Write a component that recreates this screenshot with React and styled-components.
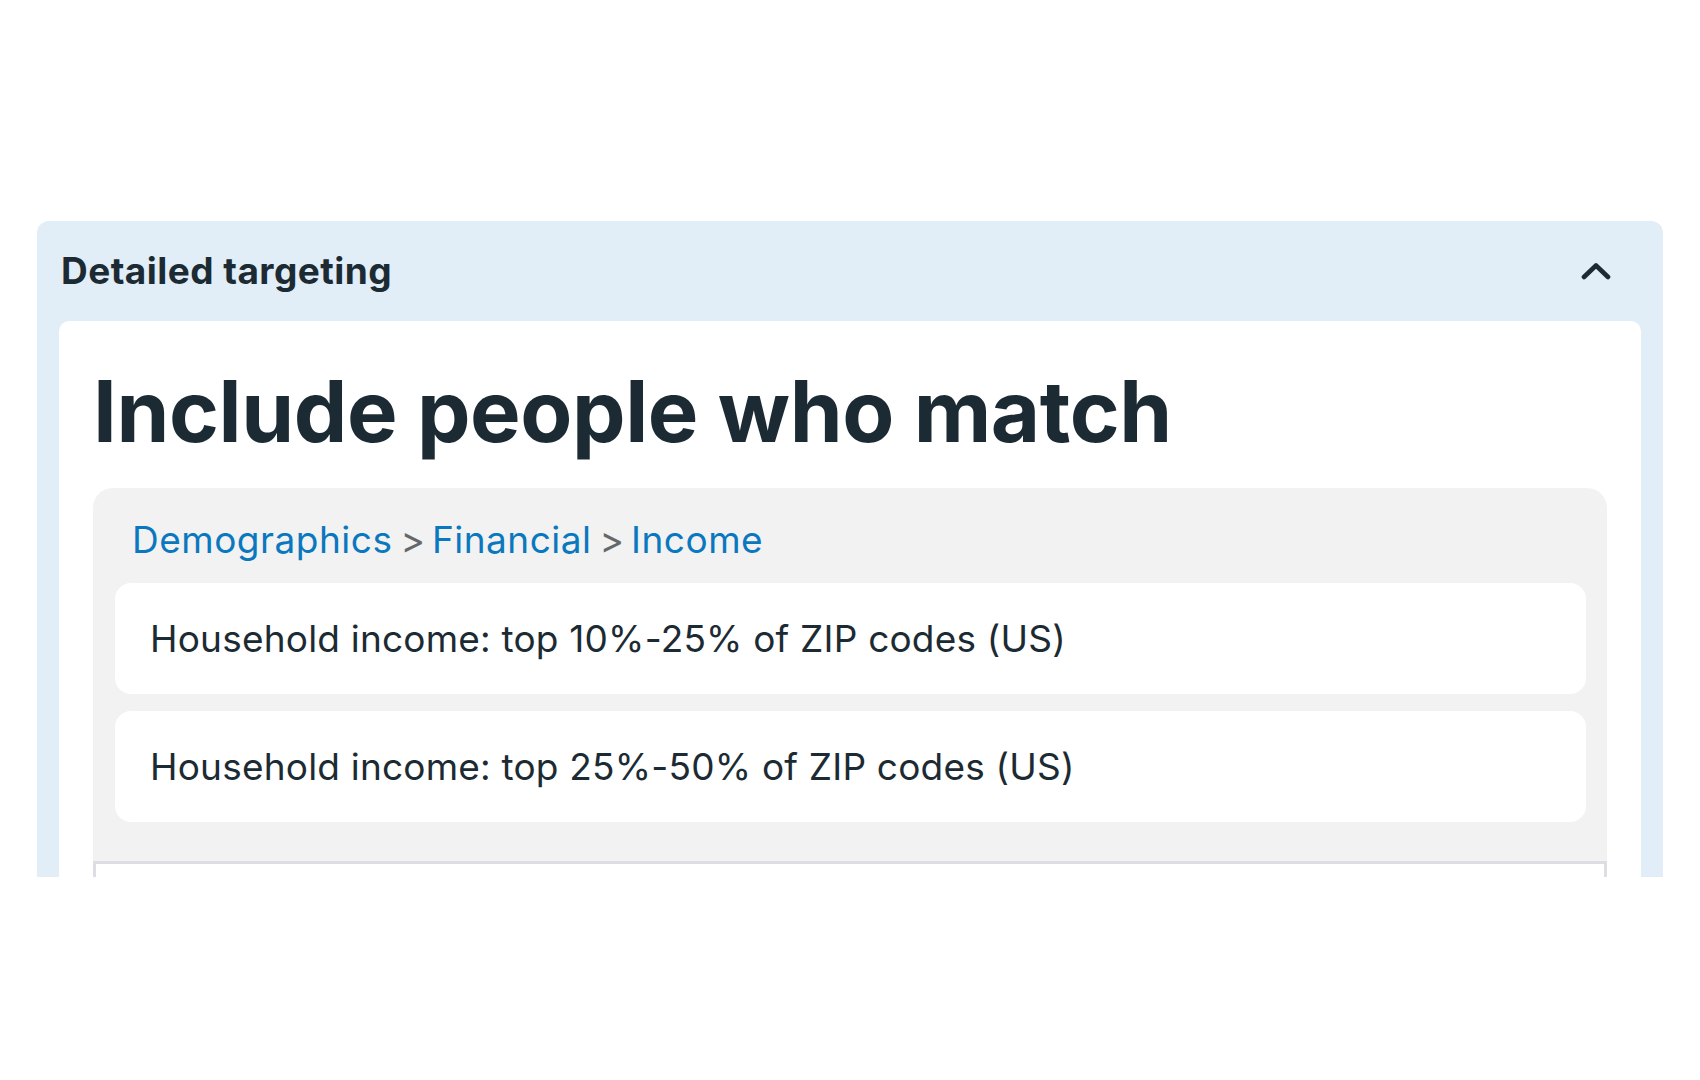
import React from "react";
import styled, { createGlobalStyle } from "styled-components";

const GlobalStyle = createGlobalStyle`
  body {
    margin: 0;
    background: #ffffff;
    font-family: Inter, "Noto Sans", "Liberation Sans", sans-serif;
    color: #1c2b33;
  }
`;

const Page = styled.main`
  padding: 221px 37px 0;
  height: 1080px;
  box-sizing: border-box;
`;

const ScrollFrame = styled.div`
  height: 656px;
  overflow: hidden;
`;

const Panel = styled.section`
  background: #e1edf7;
  border-radius: 12px 12px 0 0;
  padding-bottom: 40px;
`;

const PanelHeader = styled.header`
  height: 100px;
  display: flex;
  align-items: center;
  justify-content: space-between;
  padding: 0 47px 0 24px;
`;

const PanelTitle = styled.h3`
  margin: 0;
  font-size: 37px;
  font-weight: 700;
  letter-spacing: 0.45px;
  line-height: 1.2;
`;

const ToggleButton = styled.button`
  width: 40px;
  height: 40px;
  padding: 0;
  border: none;
  background: none;
  display: flex;
  align-items: center;
  justify-content: center;
  cursor: pointer;
  color: #1c2b33;
`;

const PanelBody = styled.div`
  background: #ffffff;
  margin: 0 22px;
  border-radius: 10px 10px 0 0;
  padding: 40px 34px 60px;
`;

const Heading = styled.h2`
  margin: 0 0 25px;
  font-size: 85px;
  font-weight: 700;
  letter-spacing: -0.4px;
  line-height: 102px;
`;

const CategoryGroup = styled.div`
  background: #f2f2f2;
  border-radius: 20px;
  overflow: hidden;
  padding-top: 28px;
`;

const Breadcrumb = styled.div`
  display: flex;
  align-items: baseline;
  padding: 0 39px;
  font-size: 37px;
  letter-spacing: 0.5px;
  line-height: 48px;
`;

const Crumb = styled.a`
  color: #0a78be;
  text-decoration: none;
`;

const Separator = styled.span`
  margin: 0 7px 0 8px;
  color: #65676b;
  letter-spacing: 0;
`;

const OptionList = styled.ul`
  list-style: none;
  margin: 19px 0 0;
  padding: 0 21px 0 22px;
  display: flex;
  flex-direction: column;
  gap: 17px;
`;

const Option = styled.li`
  height: 111px;
  box-sizing: border-box;
  background: #ffffff;
  border-radius: 16px;
  padding: 0 35px;
  display: flex;
  align-items: center;
  font-size: 37px;
  letter-spacing: 0.2px;
`;

const SearchBox = styled.div`
  margin-top: 39px;
  height: 90px;
  background: #ffffff;
  border: 3px solid #dcdee4;
`;

function ChevronUp() {
  return (
    <svg width="30" height="18" viewBox="0 0 30 18" fill="none">
      <polyline
        points="3,15 15,3.5 27,15"
        stroke="currentColor"
        strokeWidth="4.6"
        strokeLinecap="round"
        strokeLinejoin="round"
      />
    </svg>
  );
}

const path = ["Demographics", "Financial", "Income"];

const options = [
  "Household income: top 10%-25% of ZIP codes (US)",
  "Household income: top 25%-50% of ZIP codes (US)",
];

export default function App() {
  return (
    <>
      <GlobalStyle />
      <Page>
        <ScrollFrame>
          <Panel>
            <PanelHeader>
              <PanelTitle>Detailed targeting</PanelTitle>
              <ToggleButton aria-label="Collapse">
                <ChevronUp />
              </ToggleButton>
            </PanelHeader>
            <PanelBody>
              <Heading>Include people who match</Heading>
              <CategoryGroup>
                <Breadcrumb>
                  {path.map((name, i) => (
                    <React.Fragment key={name}>
                      {i > 0 && <Separator>&gt;</Separator>}
                      <Crumb href="#">{name}</Crumb>
                    </React.Fragment>
                  ))}
                </Breadcrumb>
                <OptionList>
                  {options.map((text) => (
                    <Option key={text}>{text}</Option>
                  ))}
                </OptionList>
                <SearchBox />
              </CategoryGroup>
            </PanelBody>
          </Panel>
        </ScrollFrame>
      </Page>
    </>
  );
}
